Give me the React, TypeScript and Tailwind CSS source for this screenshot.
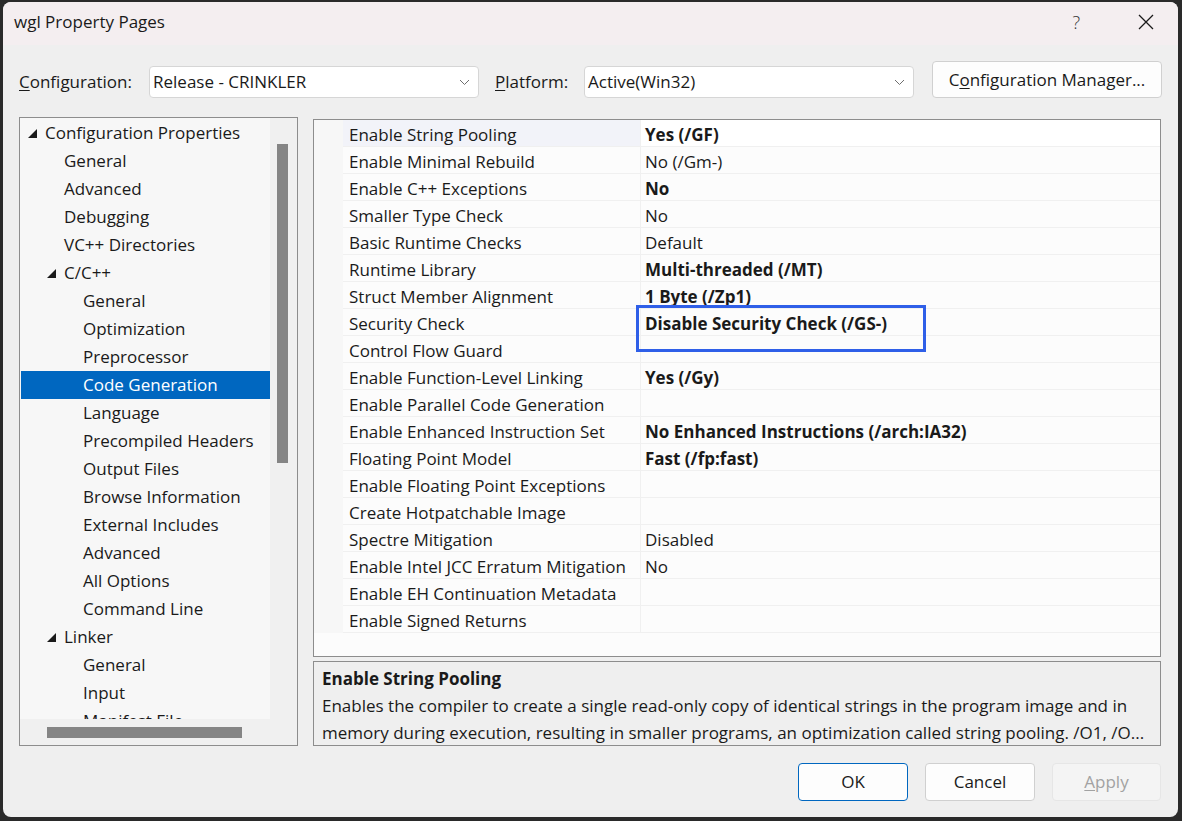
import React from "react";

const font = { fontFamily: '"Open Sans", "Noto Sans", sans-serif' };

type TreeItem = { label: string; level: number; expanded?: boolean; selected?: boolean };

const treeItems: TreeItem[] = [
  { label: "Configuration Properties", level: 0, expanded: true },
  { label: "General", level: 1 },
  { label: "Advanced", level: 1 },
  { label: "Debugging", level: 1 },
  { label: "VC++ Directories", level: 1 },
  { label: "C/C++", level: 1, expanded: true },
  { label: "General", level: 2 },
  { label: "Optimization", level: 2 },
  { label: "Preprocessor", level: 2 },
  { label: "Code Generation", level: 2, selected: true },
  { label: "Language", level: 2 },
  { label: "Precompiled Headers", level: 2 },
  { label: "Output Files", level: 2 },
  { label: "Browse Information", level: 2 },
  { label: "External Includes", level: 2 },
  { label: "Advanced", level: 2 },
  { label: "All Options", level: 2 },
  { label: "Command Line", level: 2 },
  { label: "Linker", level: 1, expanded: true },
  { label: "General", level: 2 },
  { label: "Input", level: 2 },
  { label: "Manifest File", level: 2 },
];

const props: { name: string; value: string; bold?: boolean }[] = [
  { name: "Enable String Pooling", value: "Yes (/GF)", bold: true },
  { name: "Enable Minimal Rebuild", value: "No (/Gm-)" },
  { name: "Enable C++ Exceptions", value: "No", bold: true },
  { name: "Smaller Type Check", value: "No" },
  { name: "Basic Runtime Checks", value: "Default" },
  { name: "Runtime Library", value: "Multi-threaded (/MT)", bold: true },
  { name: "Struct Member Alignment", value: "1 Byte (/Zp1)", bold: true },
  { name: "Security Check", value: "Disable Security Check (/GS-)", bold: true },
  { name: "Control Flow Guard", value: "" },
  { name: "Enable Function-Level Linking", value: "Yes (/Gy)", bold: true },
  { name: "Enable Parallel Code Generation", value: "" },
  { name: "Enable Enhanced Instruction Set", value: "No Enhanced Instructions (/arch:IA32)", bold: true },
  { name: "Floating Point Model", value: "Fast (/fp:fast)", bold: true },
  { name: "Enable Floating Point Exceptions", value: "" },
  { name: "Create Hotpatchable Image", value: "" },
  { name: "Spectre Mitigation", value: "Disabled" },
  { name: "Enable Intel JCC Erratum Mitigation", value: "No" },
  { name: "Enable EH Continuation Metadata", value: "" },
  { name: "Enable Signed Returns", value: "" },
];

function Expander() {
  return (
    <svg width="9" height="9" viewBox="0 0 9 9" className="shrink-0">
      <polygon points="9,0 9,9 0,9" fill="#1a1a1a" />
    </svg>
  );
}

function Chevron() {
  return (
    <svg width="11" height="7" viewBox="0 0 11 7" className="shrink-0">
      <path d="M1 1l4.5 4.5L10 1" fill="none" stroke="#6e6e6e" strokeWidth="1" />
    </svg>
  );
}

function Select({ value, width }: { value: string; width: string }) {
  return (
    <div className={`${width} flex h-[32px] items-center justify-between rounded-[4px] border border-[#d6d6d6] bg-white pl-[3px] pr-[8px] text-[#1a1a1a]`}>
      <span>{value}</span>
      <Chevron />
    </div>
  );
}

export default function App() {
  return (
    <div className="h-[821px] w-[1182px] bg-[#2a2a2a] pt-[2px] pl-[3px] text-[17px]" style={font}>
      <div className="flex h-[815px] w-[1175px] flex-col overflow-hidden rounded-[8px] bg-[#efefef] text-[#1a1a1a]">
        {/* Title bar */}
        <div className="flex h-[43px] items-center justify-between bg-[#f4eef0] pb-[3px] pl-[11px] pr-[24px]">
          <span className="text-[17px]">wgl Property Pages</span>
          <div className="flex items-center gap-[58px]">
            <span className="text-[18px] font-light text-[#333]">?</span>
            <svg width="16" height="16" viewBox="0 0 16 16">
              <path d="M1 1l14 14M15 1L1 15" stroke="#1a1a1a" strokeWidth="1.3" />
            </svg>
          </div>
        </div>

        {/* Configuration row */}
        <div className="mt-[16px] flex h-[37px] items-end pl-[16px]">
          <div className="flex h-[32px] items-center">
            <span className="w-[130px] whitespace-nowrap">
              <span className="underline underline-offset-2">C</span>onfiguration:
            </span>
            <Select value="Release - CRINKLER" width="w-[330px]" />
          </div>
          <div className="ml-[16px] flex h-[32px] items-center">
            <span className="w-[89px] whitespace-nowrap">
              <span className="underline underline-offset-2">P</span>latform:
            </span>
            <Select value="Active(Win32)" width="w-[330px]" />
          </div>
          <div className="ml-[18px] flex h-[37px] w-[230px] items-center justify-center whitespace-nowrap rounded-[4px] border border-[#d0d0d0] bg-[#fdfdfd]">
            C<span className="underline underline-offset-2">o</span>nfiguration Manager...
          </div>
        </div>

        {/* Main */}
        <div className="mt-[19px] flex pl-[16px]">
          {/* Tree */}
          <div className="flex h-[629px] w-[279px] flex-col border border-[#8d8d8d]">
            <div className="flex h-[601px]">
              <div className="h-full w-[250px] overflow-hidden bg-[#f7f7f7] pt-[1px]">
                {treeItems.map((item, i) => (
                  <div
                    key={i}
                    className={`flex h-[28px] items-center ${item.selected ? "ml-[1px] bg-[#0067c0] text-white" : ""}`}
                    style={{ paddingLeft: 8 + item.level * 19 - (item.selected ? 1 : 0) }}
                  >
                    <span className="flex w-[17px] items-center">{item.expanded && <Expander />}</span>
                    <span className="whitespace-nowrap">{item.label}</span>
                  </div>
                ))}
              </div>
              <div className="flex-1 bg-[#f0f0f0] pl-[7px] pt-[26px]">
                <div className="h-[319px] w-[11px] bg-[#858585]" />
              </div>
            </div>
            <div className="flex-1 bg-[#f0f0f0] pl-[27px] pt-[8px]">
              <div className="h-[11px] w-[195px] bg-[#858585]" />
            </div>
          </div>

          {/* Right column */}
          <div className="ml-[15px] flex w-[848px] flex-col">
            <div className="relative mt-[2px] h-[538px] border border-[#8d8d8d] bg-[#fcfcfc]">
              <div className="flex">
                <div className="w-[29px] bg-[#f7f7f7]" />
                <div className="flex-1">
                  {props.map((p, i) => (
                    <div key={i} className="flex h-[27px] border-b border-[#f0f0f0]">
                      <div className={`flex w-[298px] items-center whitespace-nowrap border-r border-[#f0f0f0] pl-[6px] pt-[3px] ${i === 0 ? "bg-[#f2f3f9]" : ""}`}>
                        {p.name}
                      </div>
                      <div className={`flex flex-1 items-center whitespace-nowrap pl-[4px] pt-[3px] ${i === 0 ? "bg-white" : ""} ${p.bold ? "font-bold" : ""}`}>
                        {p.value}
                      </div>
                    </div>
                  ))}
                </div>
              </div>
              {/* highlight annotation */}
              <div className="absolute left-[322px] top-[185px] h-[47px] w-[290px] border-[3px] border-[#2f5fe8]" />
            </div>

            <div className="mt-[4px] h-[85px] overflow-hidden border border-[#8d8d8d] bg-[#efefef] pl-[8px] pt-[3px] leading-[27px]">
              <div className="font-bold">Enable String Pooling</div>
              <div className="whitespace-nowrap">
                Enables the compiler to create a single read-only copy of identical strings in the program image and in
              </div>
              <div className="whitespace-nowrap">
                memory during execution, resulting in smaller programs, an optimization called string pooling. /O1, /O...
              </div>
            </div>
          </div>
        </div>

        {/* Buttons */}
        <div className="mt-[17px] flex justify-end gap-[17px] pr-[17px]">
          <div className="flex h-[38px] w-[110px] items-center justify-center rounded-[4px] border border-[#0067c0] bg-[#fdfdfd]">
            OK
          </div>
          <div className="flex h-[38px] w-[110px] items-center justify-center rounded-[4px] border border-[#d0d0d0] bg-[#fdfdfd]">
            Cancel
          </div>
          <div className="flex h-[38px] w-[109px] items-center justify-center rounded-[4px] border border-[#e6e6e6] bg-[#f4f4f4] text-[#a2a2a2]">
            <span className="underline underline-offset-2">A</span>pply
          </div>
        </div>
      </div>
    </div>
  );
}
